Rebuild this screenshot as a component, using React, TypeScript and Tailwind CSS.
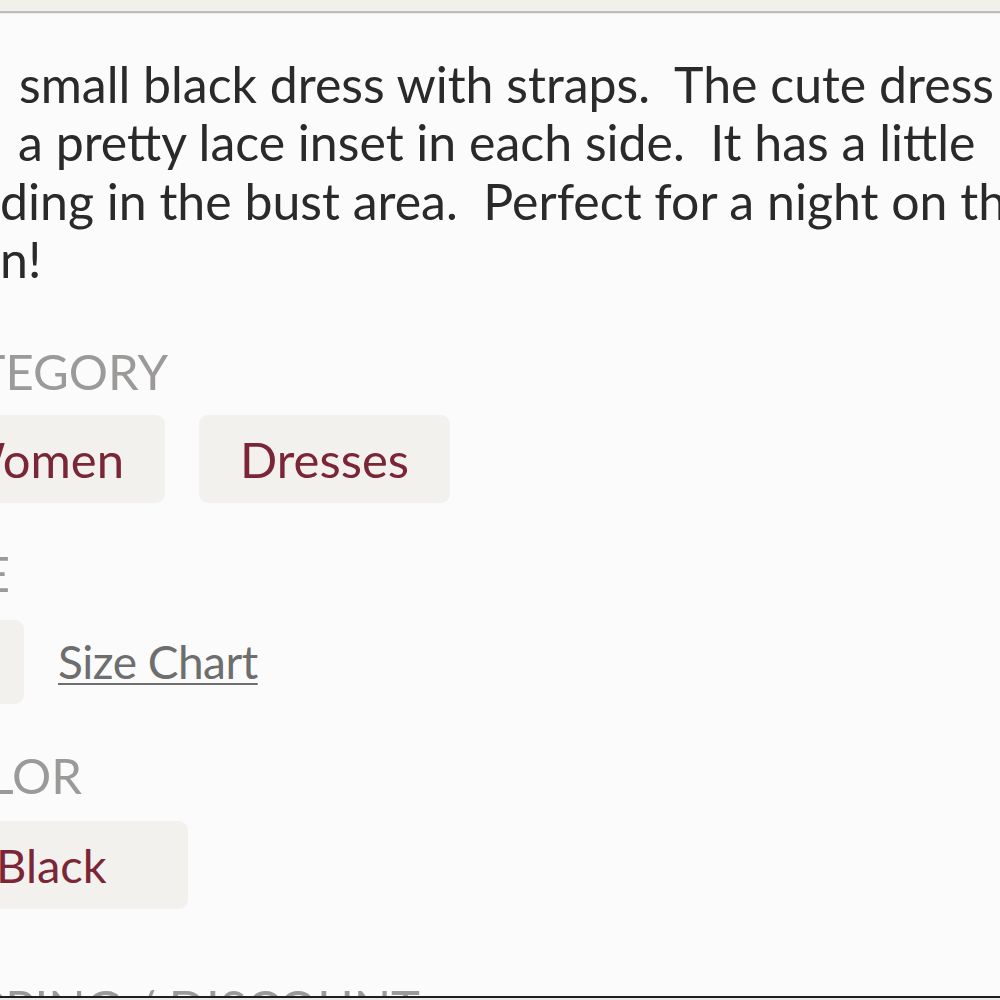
import React from "react";

const font = { fontFamily: "Lato, 'Noto Sans', sans-serif" };

function Clip({ w, children, className = "" }: { w: string; children: React.ReactNode; className?: string }) {
  return (
    <div className={`flex shrink-0 justify-end ${w} ${className}`}>
      <div className="shrink-0 whitespace-pre">{children}</div>
    </div>
  );
}

function Chip({ children }: { children: React.ReactNode }) {
  return (
    <div className="shrink-0 whitespace-nowrap rounded-[9px] bg-[#f3f1ee] px-[41px] py-[14px] text-[49px] leading-[60px] text-[#7b2636]">
      {children}
    </div>
  );
}

function Heading({ w, text, className = "" }: { w: string; text: string; className?: string }) {
  return (
    <div className={`flex text-[49px] leading-[50px] text-[#9b9a98] ${className}`}>
      <Clip w={w}>{text}</Clip>
    </div>
  );
}

export default function App() {
  return (
    <div style={font} className="flex h-[1000px] w-[1000px] flex-col overflow-hidden bg-[#fbfbfb]">
      <div className="h-[11px] shrink-0 bg-[#f2f0eb]" />
      <div className="h-[2px] shrink-0 bg-[#bebcb7]" />
      <div className="h-[1px] shrink-0 bg-[#ecebe8]" />
      <div className="flex min-h-0 flex-1 flex-col overflow-hidden">
        <div className="mt-[41px] text-[50px] leading-[58.3px] text-[#2a2a2a]">
          <div className="flex whitespace-pre">
            <Clip w="w-[2px]" className="overflow-hidden">{"Cute"}</Clip>
            <div className="w-[17px] shrink-0" />
            <div className="shrink-0">{"small black dress with straps.  The cute dress has"}</div>
          </div>
          <div className="flex whitespace-pre">
            <div className="w-[18px] shrink-0" />
            <div className="shrink-0">{"a pretty lace inset in each side.  It has a little"}</div>
          </div>
          <div className="flex whitespace-pre">
            <div className="shrink-0">{"ding in the bust area.  Perfect for a night on the"}</div>
          </div>
          <div className="flex whitespace-pre">
            <div className="shrink-0">{"n!"}</div>
          </div>
        </div>

        <Heading w="w-[168px]" text="CATEGORY" className="mt-[58px]" />
        <div className="mt-[19px] flex items-center gap-[34px]">
          <div className="flex w-[165px] shrink-0 justify-end">
            <Chip>Women</Chip>
          </div>
          <Chip>Dresses</Chip>
        </div>

        <Heading w="w-[10px]" text="SIZE" className="mt-[45px]" />
        <div className="mt-[22px] flex items-center gap-[34px]">
          <div className="flex w-[24px] shrink-0 justify-end">
            <div className="shrink-0 whitespace-nowrap rounded-[9px] bg-[#f3f1ee] px-[41px] py-[12px] text-[49px] leading-[60px] text-[#7b2636]">
              XS
            </div>
          </div>
          <a className="shrink-0 whitespace-nowrap text-[46px] leading-[60px] tracking-[-0.5px] text-[#6e6e6e] underline decoration-[2px] underline-offset-[4px]">
            Size Chart
          </a>
        </div>

        <Heading w="w-[82px]" text="COLOR" className="mt-[46px]" />
        <div className="mt-[21px] flex">
          <div className="ml-[-45px] flex h-[88px] w-[233px] shrink-0 items-center rounded-[9px] bg-[#f3f1ee] pl-[41px] text-[47px] leading-[60px] text-[#7b2636]">
            Black
          </div>
        </div>

        <Heading w="w-[420px]" text="SHIPPING / DISCOUNT" className="mt-[73px]" />
      </div>
      <div className="h-[2px] shrink-0 bg-[#1e1e1e]" />
      <div className="h-[2px] shrink-0 bg-[#e9e9e9]" />
    </div>
  );
}
